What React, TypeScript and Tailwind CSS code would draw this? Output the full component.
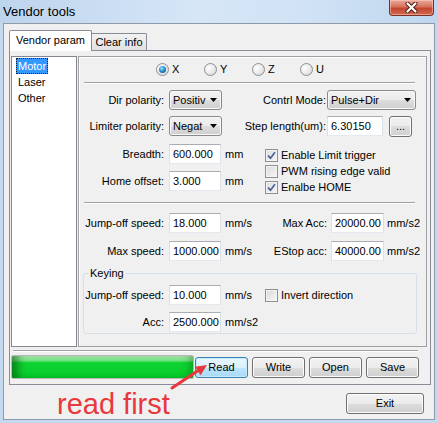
import React from "react";

const grad =
  "bg-[linear-gradient(to_bottom,#f2f2f2_0%,#ebebeb_50%,#dddddd_50%,#cfcfcf_100%)]";

function Field({ value, className }: { value: string; className: string }) {
  return (
    <div
      className={`h-[20px] bg-white border border-[#dbdfe6] border-t-[#abadb3] border-b-[#e3e9ef] flex items-center pl-[3px] whitespace-nowrap overflow-hidden ${className}`}
    >
      {value}
    </div>
  );
}

function Combo({ value, className }: { value: string; className: string }) {
  return (
    <div
      className={`h-[20px] rounded-[3px] border border-[#8a8a8a] ${grad} shadow-[inset_0_0_0_1px_#f8f8f8] flex items-center pl-[3px] pr-[4px] ${className}`}
    >
      <span className="flex-1 overflow-hidden whitespace-nowrap">{value}</span>
      <svg width="7" height="4" viewBox="0 0 7 4">
        <path d="M0 0H7L3.5 4Z" fill="#000" />
      </svg>
    </div>
  );
}

function Btn({
  label,
  className,
  primary,
}: {
  label: string;
  className: string;
  primary?: boolean;
}) {
  return (
    <div
      className={`flex items-center justify-center h-[21px] rounded-[3px] border ${
        primary
          ? "border-[#3c7fb1] bg-[linear-gradient(to_bottom,#eaf6fd_0%,#d9f0fc_50%,#bee6fd_50%,#a7d9f5_100%)] shadow-[inset_0_0_0_1px_#c6ecfc]"
          : `border-[#707070] ${grad} shadow-[inset_0_0_0_1px_#fcfcfc]`
      } ${className}`}
    >
      {label}
    </div>
  );
}

function Radio({ label, checked }: { label: string; checked?: boolean }) {
  return (
    <div className="w-[48px] flex items-center gap-[3px]">
      <div className="w-[13px] h-[13px] rounded-full border border-[#8e8f8f] bg-[radial-gradient(circle_at_35%_35%,#ffffff_0%,#e8e8e8_55%,#cdcdcd_100%)] flex items-center justify-center">
        {checked && (
          <div className="w-[7px] h-[7px] rounded-full bg-[radial-gradient(circle_at_40%_35%,#a6e4ff_0%,#2f8fd0_45%,#0b3f70_100%)]" />
        )}
      </div>
      <span>{label}</span>
    </div>
  );
}

function Check({ label, checked }: { label: string; checked?: boolean }) {
  return (
    <div className="flex items-center h-[16px]">
      <div className="w-[13px] h-[13px] border border-[#8e8f8f] bg-[linear-gradient(135deg,#d8dadd_0%,#f7f7f7_100%)] shadow-[inset_0_0_0_1px_#f4f4f4] flex items-center justify-center">
        {checked && (
          <svg width="9" height="9" viewBox="0 0 9 9">
            <path
              d="M1 4.6 L3.5 7.2 L8 1.2"
              fill="none"
              stroke="#4a5f97"
              strokeWidth="1.7"
            />
          </svg>
        )}
      </div>
      <span className="ml-[3px]">{label}</span>
    </div>
  );
}

function Sep({ className }: { className: string }) {
  return (
    <div className={`h-[2px] border-t border-t-[#a0a0a0] bg-white ${className}`} />
  );
}

export default function App() {
  return (
    <div className="relative w-[438px] h-[423px] overflow-hidden bg-[#c4d9f0] font-['Liberation_Sans',Arial,sans-serif] text-[11px] leading-[13px] text-black flex flex-col">
      {/* title bar */}
      <div className="h-[23px] shrink-0 flex items-start bg-[linear-gradient(to_right,#bdd4ed_0%,#d6e6f7_45%,#d0e2f5_70%,#bfd6ee_100%)]">
        <div className="pl-[3px] pt-[4px] text-[13px] leading-[15px]">
          Vendor tools
        </div>
        <div className="ml-auto mr-[4px] w-[45px] h-[16px] rounded-b-[4px] border border-t-0 border-[#7a2e24] bg-[linear-gradient(to_bottom,#e9a999_0%,#d8725e_45%,#c3452d_55%,#d06a53_100%)] shadow-[inset_0_0_0_1px_rgba(255,210,200,0.5)] flex items-center justify-center">
          <svg width="13" height="11" viewBox="0 0 13 11">
            <path d="M2.5 1.5 L10.5 9.5 M10.5 1.5 L2.5 9.5" stroke="#4a1a12" strokeWidth="4" strokeLinecap="round" />
            <path d="M2.5 1.5 L10.5 9.5 M10.5 1.5 L2.5 9.5" stroke="#ffffff" strokeWidth="2.2" strokeLinecap="round" />
          </svg>
        </div>
      </div>

      {/* client area */}
      <div className="mx-[3px] mb-[3px] flex-1 border border-[#8e9aa8] bg-[#f0f0f0] flex flex-col">
        {/* tabs */}
        <div className="relative z-10 flex items-end pl-[5px] pt-[6px]">
          <div className="h-[21px] w-[83px] mb-[-1px] border border-b-0 border-[#898c95] rounded-t-[2px] bg-white flex justify-center pt-[3px]">
            Vendor param
          </div>
          <div className="h-[17px] w-[55px] border border-l-0 border-b-0 border-[#898c95] rounded-tr-[2px] bg-[linear-gradient(to_bottom,#f2f2f2,#e1e1e1)] flex items-center justify-center">
            Clear info
          </div>
        </div>

        {/* tab panel */}
        <div className="ml-[5px] w-[422px] h-[335px] border border-[#898c95] bg-[#f0f0f0] flex flex-col">
          <div className="flex mt-[5px] ml-[1px] h-[291px]">
            {/* list */}
            <div className="w-[66px] border border-[#828790] bg-white pt-[1px] pl-[4px] flex flex-col items-start">
              <div className="h-[16px] px-[1px] border border-dotted border-[#1f1f1f] bg-[#3399ff] text-white flex items-center">
                Motor
              </div>
              <div className="h-[16px] pl-[2px] flex items-center">Laser</div>
              <div className="h-[16px] pl-[2px] flex items-center">Other</div>
            </div>

            {/* right panel */}
            <div className="ml-[1px] w-[349px] border border-[#a0a0a0] shadow-[inset_1px_1px_0_#ffffff] flex flex-col pt-[6px]">
              <div className="flex ml-[77px] h-[13px]">
                <Radio label="X" checked />
                <Radio label="Y" />
                <Radio label="Z" />
                <Radio label="U" />
              </div>

              <Sep className="mt-[6px] ml-[5px] w-[331px]" />

              <div className="mt-[6px] h-[20px] flex items-center">
                <div className="w-[85px] text-right">Dir polarity:</div>
                <Combo value="Positiv" className="ml-[5px] w-[53px]" />
                <div className="w-[104px] text-right">Contrl Mode:</div>
                <Combo value="Pulse+Dir" className="ml-[1px] w-[89px]" />
              </div>

              <div className="mt-[6px] h-[20px] flex items-center">
                <div className="w-[85px] text-right">Limiter polarity:</div>
                <Combo value="Negat" className="ml-[5px] w-[53px]" />
                <div className="w-[104px] text-right">Step length(um):</div>
                <Field value="6.30150" className="ml-[1px] w-[56px] h-[19px]" />
                <Btn label="..." className="ml-[6px] w-[23px]" />
              </div>

              <div className="mt-[8px] flex">
                <div className="w-[186px] flex flex-col">
                  <div className="h-[20px] flex items-center">
                    <div className="w-[85px] text-right">Breadth:</div>
                    <Field value="600.000" className="ml-[5px] w-[52px]" />
                    <span className="ml-[4px]">mm</span>
                  </div>
                  <div className="mt-[7px] h-[20px] flex items-center">
                    <div className="w-[85px] text-right">Home offset:</div>
                    <Field value="3.000" className="ml-[5px] w-[52px]" />
                    <span className="ml-[4px]">mm</span>
                  </div>
                </div>
                <div className="pt-[3px] flex flex-col">
                  <Check label="Enable Limit trigger" checked />
                  <Check label="PWM rising edge valid" />
                  <Check label="Enalbe HOME" checked />
                </div>
              </div>

              <Sep className="mt-[7px] ml-[5px] w-[331px]" />

              <div className="mt-[9px] h-[20px] flex items-center">
                <div className="w-[85px] text-right">Jump-off speed:</div>
                <Field value="18.000" className="ml-[5px] w-[52px]" />
                <span className="w-[34px] pl-[4px]">mm/s</span>
                <div className="w-[72px] text-right">Max Acc:</div>
                <Field value="20000.00" className="ml-[4px] w-[53px]" />
                <span className="ml-[3px]">mm/s2</span>
              </div>

              <div className="mt-[8px] h-[20px] flex items-center">
                <div className="w-[85px] text-right">Max speed:</div>
                <Field value="1000.000" className="ml-[5px] w-[52px]" />
                <span className="w-[34px] pl-[4px]">mm/s</span>
                <div className="w-[72px] text-right">EStop acc:</div>
                <Field value="40000.00" className="ml-[4px] w-[53px]" />
                <span className="ml-[3px]">mm/s2</span>
              </div>

              <fieldset className="mt-[6px] ml-[4px] w-[334px] min-w-0 border border-[#d5dfe5] rounded-[3px] pb-[1px]">
                <legend className="ml-[4px] px-[2px] leading-[13px]">Keying</legend>
                <div className="mt-[5px] h-[20px] flex items-center">
                  <div className="w-[80px] text-right">Jump-off speed:</div>
                  <Field value="10.000" className="ml-[5px] w-[52px]" />
                  <span className="w-[44px] pl-[4px]">mm/s</span>
                  <Check label="Invert direction" />
                </div>
                <div className="mt-[7px] h-[20px] flex items-center">
                  <div className="w-[80px] text-right">Acc:</div>
                  <Field value="2500.000" className="ml-[5px] w-[52px]" />
                  <span className="ml-[4px]">mm/s2</span>
                </div>
              </fieldset>
            </div>
          </div>

          <Sep className="mt-[3px] ml-[3px] w-[405px]" />

          <div className="mt-[3px] ml-[1px] h-[24px] flex items-center">
            <div className="w-[183px] h-[24px] rounded-[2px] border border-[#b8b8b8] bg-[linear-gradient(to_bottom,#b6f2bd_0%,#6be37c_22%,#0fd434_30%,#05cc2a_100%)] shadow-[inset_10px_0_8px_-4px_rgba(0,70,10,0.55),inset_-8px_0_8px_-5px_rgba(0,70,10,0.35)]" />
            <Btn label="Read" primary className="ml-[1px] w-[53px]" />
            <Btn label="Write" className="ml-[4px] w-[53px]" />
            <Btn label="Open" className="ml-[4px] w-[53px]" />
            <Btn label="Save" className="ml-[4px] w-[53px]" />
          </div>
        </div>

        <div className="mt-[8px] flex justify-end pr-[10px]">
          <Btn label="Exit" className="w-[78px]" />
        </div>
      </div>

      {/* annotation overlay */}
      <div className="absolute left-[57px] top-[390px] text-[29px] leading-[29px] text-[#e8383d] font-['Liberation_Sans',Arial,sans-serif]">
        read first
      </div>
      <svg
        className="absolute left-[165px] top-[360px]"
        width="50"
        height="35"
        viewBox="0 0 50 35"
      >
        <path d="M7 28 L34 10" stroke="#e8383d" strokeWidth="3" strokeLinecap="round" />
        <path d="M42 5 L35.6 15.2 L30 6.8 Z" fill="#e8383d" />
      </svg>
    </div>
  );
}
